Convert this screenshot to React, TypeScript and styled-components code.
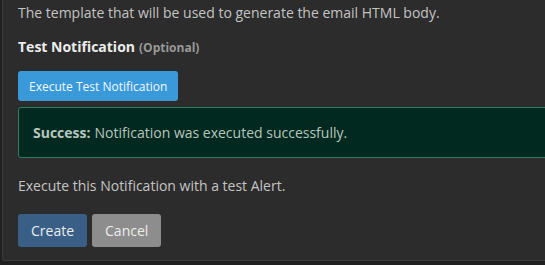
import React from "react";
import styled, { createGlobalStyle } from "styled-components";

const Global = createGlobalStyle`
  html, body { margin: 0; padding: 0; background: #202020; overflow: hidden; }
  body { font-family: "Open Sans", "Noto Sans", sans-serif; }
`;

const Panel = styled.div`
  margin-left: 2px;
  width: 640px;
  height: 261px;
  box-sizing: border-box;
  background: #2c2c2c;
  border: 1px solid #3a3a3a;
  border-top: none;
  border-bottom-left-radius: 3px;
  padding: 3px 0 0 15px;
`;

const Help = styled.p`
  margin: 0;
  font-size: 14px;
  line-height: 20px;
  color: #c4c4c4;
`;

const Heading = styled.h4`
  margin: 14px 0 0;
  font-size: 14px;
  line-height: 20px;
  font-weight: 700;
  color: #ececec;
`;

const Optional = styled.span`
  font-size: 12px;
  color: #999;
  margin-left: 4px;
`;

const Button = styled.button<{ $variant: "info" | "primary" | "muted"; $size?: "sm" | "md" }>`
  font-family: inherit;
  border: none;
  border-radius: 3px;
  cursor: pointer;
  color: ${(p) => (p.$variant === "info" ? "#f2f8fd" : "#ececec")};
  background: ${(p) =>
    p.$variant === "info" ? "#3a9ad9" : p.$variant === "primary" ? "#3a5f87" : "#8d8d8d"};
  font-size: ${(p) => (p.$size === "sm" ? "12px" : "14px")};
  height: ${(p) => (p.$size === "sm" ? "30px" : "33px")};
  padding: ${(p) => (p.$size === "sm" ? "0 11px" : "0 13px")};
`;

const TestRow = styled.div`
  margin-top: 13px;
`;

const Alert = styled.div`
  margin-top: 6px;
  height: 51px;
  box-sizing: border-box;
  background: #02291f;
  border: 1px solid #2f7d62;
  border-radius: 3px;
  padding: 0 14px;
  display: flex;
  align-items: center;
  font-size: 14px;
  color: #b7c6be;
`;

const Strong = styled.strong`
  font-weight: 700;
  margin-right: 4px;
`;

const Note = styled.p`
  margin: 18px 0 0;
  font-size: 14px;
  line-height: 20px;
  color: #c4c4c4;
`;

const Actions = styled.div`
  margin-top: 18px;
  display: flex;
  gap: 5px;
`;

export default function App() {
  return (
    <>
      <Global />
      <Panel>
        <Help>The template that will be used to generate the email HTML body.</Help>
        <Heading>
          Test Notification<Optional>(Optional)</Optional>
        </Heading>
        <TestRow>
          <Button $variant="info" $size="sm">Execute Test Notification</Button>
        </TestRow>
        <Alert>
          <Strong>Success:</Strong>Notification was executed successfully.
        </Alert>
        <Note>Execute this Notification with a test Alert.</Note>
        <Actions>
          <Button $variant="primary">Create</Button>
          <Button $variant="muted">Cancel</Button>
        </Actions>
      </Panel>
    </>
  );
}
